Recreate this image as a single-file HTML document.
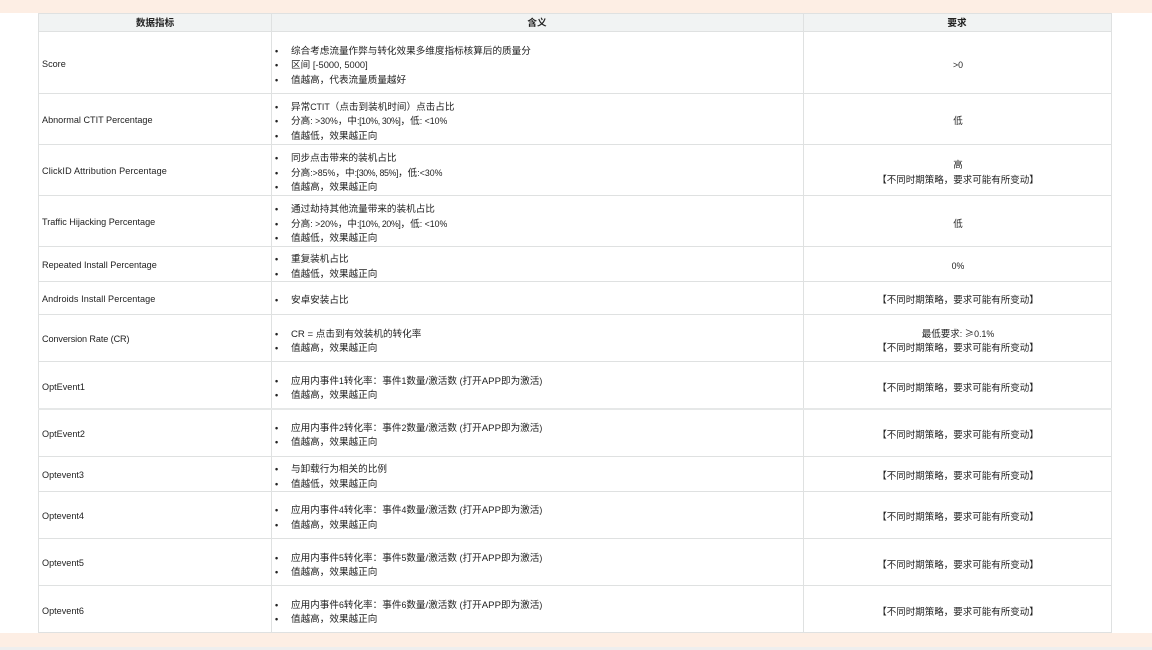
<!DOCTYPE html>
<html lang="zh-CN"><head><meta charset="utf-8"><style>
html,body{margin:0;padding:0;background:#fff}
#p{position:relative;width:1152px;height:650px;overflow:hidden;background:#fff;font-family:"Liberation Sans","Noto Sans CJK SC",sans-serif;font-size:9.6px;color:#222;filter:blur(.3px)}
.b{position:absolute;left:0;width:1152px;background:#fdeee4}
.h{position:absolute;background:#dfe1e1}
.t{position:absolute;white-space:nowrap;line-height:14px;height:14px;margin-top:4px}
.x{margin-top:3px}
.c{text-align:center}
.n{left:42px;font-size:9.1px;margin-top:3px}
.d{left:275px;font-weight:bold;font-size:9px;margin-top:3px}
.m{left:291px}
.r{left:804px;width:308px;font-size:9.5px}
.k{font-weight:bold;color:#222;font-size:9.6px}
i{font-style:normal;font-size:8.8px}
i.s{letter-spacing:-.36px}
u{text-decoration:none;font-family:"Noto Sans CJK SC",sans-serif}
</style></head><body><div id="p">
<div class="b" style="top:0;height:13px"></div>
<div class="b" style="top:633px;height:14px"></div>
<div style="position:absolute;left:0;top:647px;width:1152px;height:3px;background:#eeeeee"></div>
<div style="position:absolute;left:39px;top:13px;width:1072px;height:18px;background:#f1f3f3"></div>
<div class="h" style="left:38px;top:13px;width:1px;height:620px"></div>
<div class="h" style="left:271px;top:13px;width:1px;height:620px"></div>
<div class="h" style="left:803px;top:13px;width:1px;height:620px"></div>
<div class="h" style="left:1111px;top:13px;width:1px;height:620px"></div>
<div class="h" style="left:38px;top:13px;width:1074px;height:1px"></div>
<div class="h" style="left:38px;top:31px;width:1074px;height:1px"></div>
<div class="h" style="left:38px;top:93px;width:1074px;height:1px"></div>
<div class="h" style="left:38px;top:144px;width:1074px;height:1px"></div>
<div class="h" style="left:38px;top:195px;width:1074px;height:1px"></div>
<div class="h" style="left:38px;top:246px;width:1074px;height:1px"></div>
<div class="h" style="left:38px;top:281px;width:1074px;height:1px"></div>
<div class="h" style="left:38px;top:314px;width:1074px;height:1px"></div>
<div class="h" style="left:38px;top:361px;width:1074px;height:1px"></div>
<div class="h" style="left:38px;top:408px;width:1074px;height:2px;background:#e6e8e8"></div>
<div class="h" style="left:38px;top:456px;width:1074px;height:1px"></div>
<div class="h" style="left:38px;top:491px;width:1074px;height:1px"></div>
<div class="h" style="left:38px;top:538px;width:1074px;height:1px"></div>
<div class="h" style="left:38px;top:585px;width:1074px;height:1px"></div>
<div class="h" style="left:38px;top:632px;width:1074px;height:1px"></div>

<div class="t c k" style="left:39px;width:232px;top:13px">数据指标</div>
<div class="t c k" style="left:272px;width:530px;top:13px">含义</div>
<div class="t c k" style="left:803px;width:308px;top:13px">要求</div>

<div class="t n" style="top:54px">Score</div>
<div class="t d" style="top:41px">•</div><div class="t m" style="top:41px">综合考虑流量作弊与转化效果多维度指标核算后的质量分</div>
<div class="t d" style="top:55px">•</div><div class="t m x" style="top:55px">区间 <i style="font-size:9.3px">[-5000, 5000]</i></div>
<div class="t d" style="top:70px">•</div><div class="t m" style="top:70px">值越高，代表流量质量越好</div>
<div class="t c r x" style="top:55px"><i>&gt;0</i></div>

<div class="t n" style="top:110px">Abnormal CTIT Percentage</div>
<div class="t d" style="top:97px">•</div><div class="t m x" style="top:97px">异常<i>CTIT</i>（点击到装机时间）点击占比</div>
<div class="t d" style="top:111px">•</div><div class="t m x" style="top:111px">分高<i>: &gt;30%</i>，中<i class="s">:[10%, 30%]</i>，低<i>: &lt;10%</i></div>
<div class="t d" style="top:126px">•</div><div class="t m" style="top:126px">值越低，效果越正向</div>
<div class="t c r" style="top:111px">低</div>

<div class="t n" style="top:161px;letter-spacing:.14px">ClickID Attribution Percentage</div>
<div class="t d" style="top:148px">•</div><div class="t m" style="top:148px">同步点击带来的装机占比</div>
<div class="t d" style="top:163px">•</div><div class="t m x" style="top:163px">分高<i>:&gt;85%</i>，中<i class="s">:[30%, 85%]</i>，低<i>:&lt;30%</i></div>
<div class="t d" style="top:177px">•</div><div class="t m" style="top:177px">值越高，效果越正向</div>
<div class="t c r" style="top:155px">高</div>
<div class="t c r" style="top:170px">【不同时期策略，要求可能有所变动】</div>

<div class="t n" style="top:212px">Traffic Hijacking Percentage</div>
<div class="t d" style="top:199px">•</div><div class="t m" style="top:199px">通过劫持其他流量带来的装机占比</div>
<div class="t d" style="top:214px">•</div><div class="t m x" style="top:214px">分高<i>: &gt;20%</i>，中<i class="s">:[10%, 20%]</i>，低<i>: &lt;10%</i></div>
<div class="t d" style="top:228px">•</div><div class="t m" style="top:228px">值越低，效果越正向</div>
<div class="t c r" style="top:214px">低</div>

<div class="t n" style="top:255px">Repeated Install Percentage</div>
<div class="t d" style="top:249px">•</div><div class="t m" style="top:249px">重复装机占比</div>
<div class="t d" style="top:264px">•</div><div class="t m" style="top:264px">值越低，效果越正向</div>
<div class="t c r x" style="top:256px"><i>0%</i></div>

<div class="t n" style="top:289px;letter-spacing:.08px">Androids Install Percentage</div>
<div class="t d" style="top:290px">•</div><div class="t m" style="top:290px">安卓安装占比</div>
<div class="t c r" style="top:290px">【不同时期策略，要求可能有所变动】</div>

<div class="t n" style="top:329px;letter-spacing:-.1px">Conversion Rate (CR)</div>
<div class="t d" style="top:324px">•</div><div class="t m" style="top:324px">CR = 点击到有效装机的转化率</div>
<div class="t d" style="top:338px">•</div><div class="t m" style="top:338px">值越高，效果越正向</div>
<div class="t c r" style="top:324px;margin-top:2px">最低要求<i>: </i><u>≥</u><i>0.1%</i></div>
<div class="t c r" style="top:338px">【不同时期策略，要求可能有所变动】</div>

<div class="t n" style="top:377px">OptEvent1</div>
<div class="t d" style="top:371px">•</div><div class="t m x" style="top:371px">应用内事件<i>1</i>转化率：事件<i>1</i>数量/激活数 <i>(</i>打开APP即为激活<i>)</i></div>
<div class="t d" style="top:385px">•</div><div class="t m" style="top:385px">值越高，效果越正向</div>
<div class="t c r" style="top:378px">【不同时期策略，要求可能有所变动】</div>

<div class="t n" style="top:424px">OptEvent2</div>
<div class="t d" style="top:418px">•</div><div class="t m x" style="top:418px">应用内事件<i>2</i>转化率：事件<i>2</i>数量/激活数 <i>(</i>打开APP即为激活<i>)</i></div>
<div class="t d" style="top:432px">•</div><div class="t m" style="top:432px">值越高，效果越正向</div>
<div class="t c r" style="top:425px">【不同时期策略，要求可能有所变动】</div>

<div class="t n" style="top:465px">Optevent3</div>
<div class="t d" style="top:459px">•</div><div class="t m" style="top:459px">与卸载行为相关的比例</div>
<div class="t d" style="top:474px">•</div><div class="t m" style="top:474px">值越低，效果越正向</div>
<div class="t c r" style="top:466px">【不同时期策略，要求可能有所变动】</div>

<div class="t n" style="top:506px">Optevent4</div>
<div class="t d" style="top:500px">•</div><div class="t m x" style="top:500px">应用内事件<i>4</i>转化率：事件<i>4</i>数量/激活数 <i>(</i>打开APP即为激活<i>)</i></div>
<div class="t d" style="top:515px">•</div><div class="t m" style="top:515px">值越高，效果越正向</div>
<div class="t c r" style="top:507px">【不同时期策略，要求可能有所变动】</div>

<div class="t n" style="top:553px">Optevent5</div>
<div class="t d" style="top:548px">•</div><div class="t m x" style="top:548px">应用内事件<i>5</i>转化率：事件<i>5</i>数量/激活数 <i>(</i>打开APP即为激活<i>)</i></div>
<div class="t d" style="top:562px">•</div><div class="t m" style="top:562px">值越高，效果越正向</div>
<div class="t c r" style="top:555px">【不同时期策略，要求可能有所变动】</div>

<div class="t n" style="top:601px">Optevent6</div>
<div class="t d" style="top:595px">•</div><div class="t m x" style="top:595px">应用内事件<i>6</i>转化率：事件<i>6</i>数量/激活数 <i>(</i>打开APP即为激活<i>)</i></div>
<div class="t d" style="top:609px">•</div><div class="t m" style="top:609px">值越高，效果越正向</div>
<div class="t c r" style="top:602px">【不同时期策略，要求可能有所变动】</div>
</div></body></html>
